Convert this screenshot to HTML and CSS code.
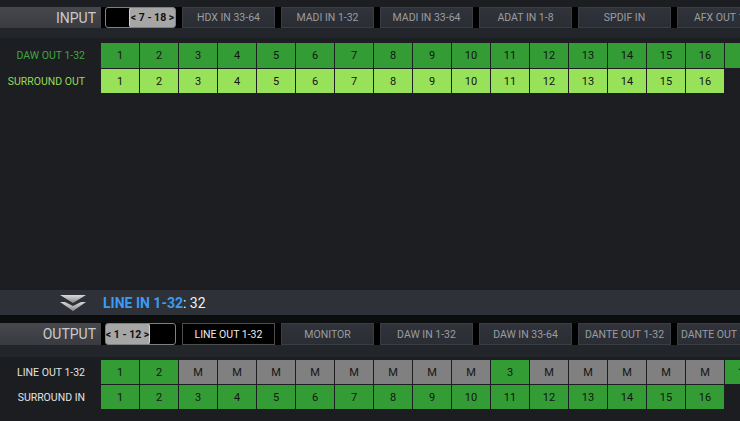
FILE: index.html
```html
<!DOCTYPE html>
<html>
<head>
<meta charset="utf-8">
<link rel="stylesheet" href="styles.css">
</head>
<body>
<div class="app">
  <section class="panel panel-in">
    <div class="hdr">
      <div class="hdr-label">INPUT</div>
      <div class="scroller"><div class="void"></div><div class="thumb">&lt; 7 - 18 &gt;</div></div>
      <div class="tab">HDX IN 33-64</div>
      <div class="tab">MADI IN 1-32</div>
      <div class="tab">MADI IN 33-64</div>
      <div class="tab">ADAT IN 1-8</div>
      <div class="tab">SPDIF IN</div>
      <div class="tab">AFX OUT 1-8</div>
    </div>
    <div class="strip"></div>
    <div class="rows rows-in">
      <div class="row r25">
        <div class="rlabel c-dark">DAW OUT 1-32</div>
        <div class="cells">
          <div class="cell g">1</div><div class="cell g">2</div><div class="cell g">3</div><div class="cell g">4</div><div class="cell g">5</div><div class="cell g">6</div><div class="cell g">7</div><div class="cell g">8</div><div class="cell g">9</div><div class="cell g">10</div><div class="cell g">11</div><div class="cell g">12</div><div class="cell g">13</div><div class="cell g">14</div><div class="cell g">15</div><div class="cell g">16</div><div class="cell g"></div>
        </div>
      </div>
      <div class="row r24">
        <div class="rlabel c-light">SURROUND OUT</div>
        <div class="cells">
          <div class="cell lg">1</div><div class="cell lg">2</div><div class="cell lg">3</div><div class="cell lg">4</div><div class="cell lg">5</div><div class="cell lg">6</div><div class="cell lg">7</div><div class="cell lg">8</div><div class="cell lg">9</div><div class="cell lg">10</div><div class="cell lg">11</div><div class="cell lg">12</div><div class="cell lg">13</div><div class="cell lg">14</div><div class="cell lg">15</div><div class="cell lg">16</div>
        </div>
      </div>
    </div>
  </section>
  <div class="band">
    <svg class="chev" width="26" height="18" viewBox="0 0 26 18">
      <defs>
        <linearGradient id="cg" x1="0" y1="0" x2="0" y2="1">
          <stop offset="0" stop-color="#d8d8d8"/>
          <stop offset="1" stop-color="#8a8a8a"/>
        </linearGradient>
      </defs>
      <polygon points="0,0 26,0 13,8" fill="url(#cg)"/>
      <polygon points="0,7 5,7 13,11 21,7 26,7 13,16" fill="url(#cg)"/>
    </svg>
    <span class="band-text"><b class="blue">LINE IN 1-32</b>: 32</span>
  </div>
  <div class="sep"></div>
  <section class="panel panel-out">
    <div class="hdr hdr22">
      <div class="hdr-label">OUTPUT</div>
      <div class="scroller"><div class="thumb thumb-out">&lt; 1 - 12 &gt;</div><div class="void"></div></div>
      <div class="tab tab-sel">LINE OUT 1-32</div>
      <div class="tab">MONITOR</div>
      <div class="tab">DAW IN 1-32</div>
      <div class="tab">DAW IN 33-64</div>
      <div class="tab">DANTE OUT 1-32</div>
      <div class="tab">DANTE OUT 33-64</div>
    </div>
    <div class="strip strip12"></div>
    <div class="rows rows-out">
      <div class="row r24">
        <div class="rlabel c-white">LINE OUT 1-32</div>
        <div class="cells">
          <div class="cell g">1</div><div class="cell g">2</div><div class="cell m">M</div><div class="cell m">M</div><div class="cell m">M</div><div class="cell m">M</div><div class="cell m">M</div><div class="cell m">M</div><div class="cell m">M</div><div class="cell m">M</div><div class="cell g">3</div><div class="cell m">M</div><div class="cell m">M</div><div class="cell m">M</div><div class="cell m">M</div><div class="cell m">M</div><div class="cell g">17</div>
        </div>
      </div>
      <div class="row r24">
        <div class="rlabel c-white">SURROUND IN</div>
        <div class="cells">
          <div class="cell g">1</div><div class="cell g">2</div><div class="cell g">3</div><div class="cell g">4</div><div class="cell g">5</div><div class="cell g">6</div><div class="cell g">7</div><div class="cell g">8</div><div class="cell g">9</div><div class="cell g">10</div><div class="cell g">11</div><div class="cell g">12</div><div class="cell g">13</div><div class="cell g">14</div><div class="cell g">15</div><div class="cell g">16</div>
        </div>
      </div>
    </div>
  </section>
</div>
</body>
</html>
```
FILE: styles.css
```css
* { box-sizing: border-box; }
html, body { margin: 0; padding: 0; }
body {
  width: 740px;
  height: 421px;
  overflow: hidden;
  background: #1b1d21;
  font-family: Roboto, "Liberation Sans", sans-serif;
}
.app {
  width: 740px;
  height: 421px;
  display: flex;
  flex-direction: column;
  overflow: hidden;
}
.panel-in {
  height: 290px;
  padding-top: 7px;
  background: #1c1e22;
  flex: none;
}
.panel-out {
  flex: 1;
  background: #1b1d21;
}
.hdr {
  height: 21px;
  display: flex;
  background: #000;
  overflow: hidden;
}
.hdr22 { height: 22px; }
.hdr-label {
  width: 101px;
  flex: none;
  background: linear-gradient(#46484d, #393b40);
  color: #c9cbce;
  font-size: 14px;
  text-align: right;
  padding-right: 5px;
  display: flex;
  align-items: center;
  justify-content: flex-end;
}
.scroller {
  width: 71px;
  flex: none;
  margin-left: 4px;
  border: 1px solid #808080;
  border-radius: 3px;
  background: #000;
  display: flex;
  overflow: hidden;
}
.void { flex: 1; }
.thumb {
  width: 47px;
  flex: none;
  background: #a6a6a6;
  border: 1px solid #d2d2d2;
  border-radius: 3px;
  margin: -1px -1px -1px 0;
  color: #111;
  font-size: 10.5px;
  font-weight: bold;
  display: flex;
  align-items: center;
  justify-content: center;
  white-space: nowrap;
}
.thumb-out {
  width: 45px;
  margin: -1px 0 -1px -1px;
}
.tab {
  width: 93px;
  flex: none;
  margin-left: 6px;
  background: linear-gradient(#30333a, #2a2d33);
  border: 1px solid #3a3d43;
  color: #9a9da1;
  font-size: 10.5px;
  display: flex;
  align-items: center;
  justify-content: center;
  white-space: nowrap;
  overflow: hidden;
}
.tab-sel {
  background: #000;
  border-color: #4e4e4e;
  color: #ececec;
}
.strip {
  height: 10px;
  background: #22252a;
}
.strip12 { height: 12px; }
.rows {
  display: flex;
  flex-direction: column;
  gap: 1px;
}
.rows-in { margin-top: 5px; }
.rows-out { margin-top: 3px; }
.row {
  display: flex;
  white-space: nowrap;
}
.r25 { height: 25px; }
.r24 { height: 24px; }
.rlabel {
  width: 101px;
  flex: none;
  font-size: 10.5px;
  text-align: right;
  padding-right: 16px;
  display: flex;
  align-items: center;
  justify-content: flex-end;
}
.c-dark { color: #3ea83e; }
.c-light { color: #94dc55; }
.c-white { color: #e2e2e2; }
.cells {
  display: flex;
  gap: 1px;
}
.cell {
  width: 38px;
  flex: none;
  display: flex;
  align-items: center;
  justify-content: center;
  font-size: 11px;
  color: #141414;
}
.g { background: #339c35; }
.lg { background: #98e25a; }
.m { background: #808080; }
.band {
  height: 25px;
  flex: none;
  background: #2e3137;
  display: flex;
  align-items: center;
  padding-left: 60px;
}
.chev { flex: none; margin-top: 2px; }
.band-text {
  margin-left: 17px;
  font-size: 14px;
  color: #f2f2f2;
}
.blue { color: #3a9cf4; font-weight: bold; }
.sep {
  height: 8px;
  flex: none;
  background: #0c0d0f;
}
```
